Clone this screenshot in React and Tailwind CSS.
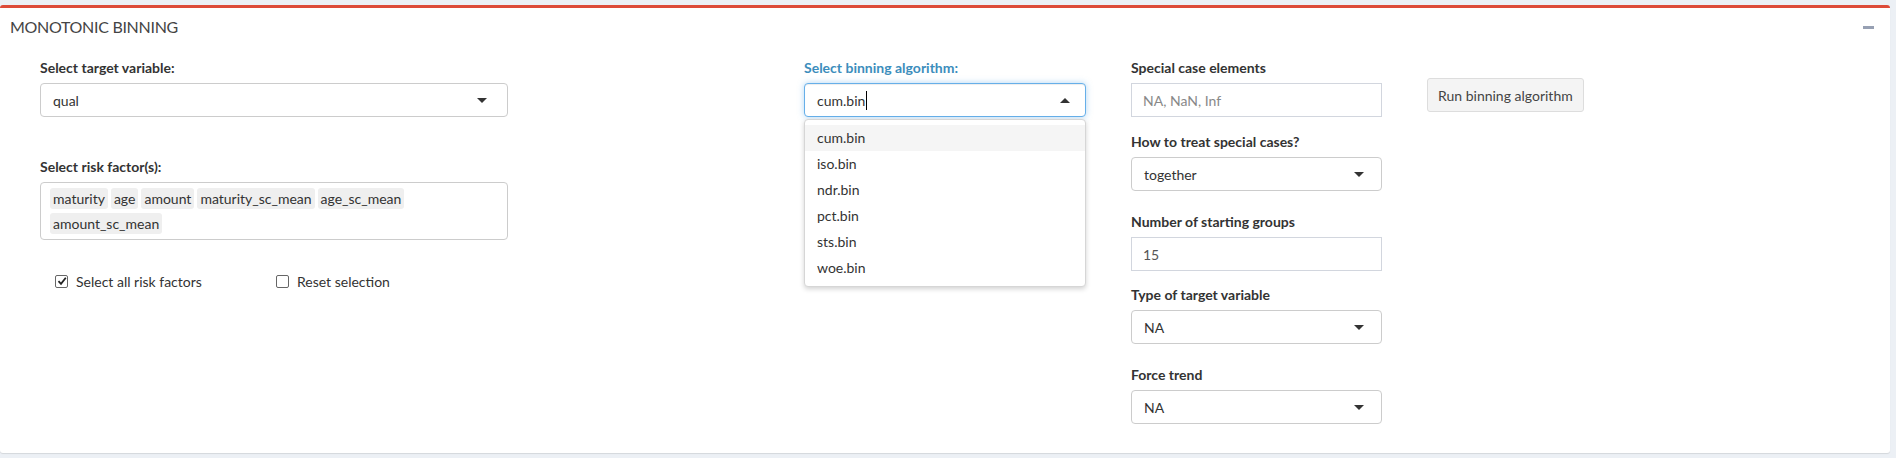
import React from 'react';

const font = { fontFamily: 'Lato, "Noto Sans", sans-serif' };

const Label = ({ children, active }) => (
  <div className={`h-[20px] leading-[20px] mb-[5px] text-[14px] font-bold ${active ? 'text-[#3c8dbc]' : 'text-[#333]'}`}>
    {children}
  </div>
);

const Caret = ({ up }) =>
  up ? (
    <span className="w-0 h-0 border-x-[5px] border-x-transparent border-b-[5px] border-b-[#333]" />
  ) : (
    <span className="w-0 h-0 border-x-[5px] border-x-transparent border-t-[5px] border-t-[#333]" />
  );

const Select = ({ value, caretRight = 'pr-[17px]' }) => (
  <div className={`h-[34px] border border-[#ccc] rounded-[4px] bg-white flex items-center justify-between pl-[12px] ${caretRight} text-[14px] text-[#333]`}>
    <span>{value}</span>
    <Caret />
  </div>
);

const TextInput = ({ value, placeholder }) => (
  <div className="h-[34px] border border-[#d2d6de] bg-white flex items-center px-[11px] text-[14px]">
    {value ? <span className="text-[#555]">{value}</span> : <span className="text-[#888]">{placeholder}</span>}
  </div>
);

const Chip = ({ children }) => (
  <span className="bg-[#efefef] text-[#333] rounded-[3px] px-[3px] h-[21px] leading-[21px] mr-[3px] mb-[4px] text-[14px]">
    {children}
  </span>
);

const Check = ({ checked, label }) => (
  <div className="flex items-center gap-[8px] h-[20px] text-[14px] text-[#333]">
    <span className="w-[13px] h-[13px] border border-[#666] rounded-[2px] bg-white flex items-center justify-center">
      {checked && (
        <svg width="10" height="10" viewBox="0 0 10 10">
          <path d="M1.5 5.2 L4 7.8 L8.8 1.8" fill="none" stroke="#222" strokeWidth="1.8" />
        </svg>
      )}
    </span>
    <span>{label}</span>
  </div>
);

const algorithms = ['cum.bin', 'iso.bin', 'ndr.bin', 'pct.bin', 'sts.bin', 'woe.bin'];
const riskFactors = ['maturity', 'age', 'amount', 'maturity_sc_mean', 'age_sc_mean', 'amount_sc_mean'];

export default function App() {
  return (
    <div className="w-full h-[458px] bg-[#ecf0f5] pt-[5px] pr-[6px]" style={font}>
      <div className="bg-white border-t-[3px] border-[#dd4b39] rounded-[3px] shadow-[0_1px_1px_rgba(0,0,0,0.1)] h-[448px]">
        {/* header */}
        <div className="flex items-center justify-between h-[38px] pl-[10px] pr-[16px]">
          <h3 className="text-[16px] tracking-[-0.3px] text-[#444] leading-none">MONOTONIC BINNING</h3>
          <span className="w-[11px] h-[3px] bg-[#97a0b3]" />
        </div>

        {/* body */}
        <div className="flex items-start pl-[40px] pt-[12px]">
          {/* target + risk factors */}
          <div className="w-[468px]">
            <Label>Select target variable:</Label>
            <Select value="qual" caretRight="pr-[20px]" />
            <div className="mt-[40px]">
              <Label>Select risk factor(s):</Label>
              <div className="min-h-[58px] border border-[#ccc] rounded-[4px] bg-white pl-[9px] pr-[8px] pt-[5px] pb-[1px] flex flex-wrap">
                {riskFactors.map((f) => (
                  <Chip key={f}>{f}</Chip>
                ))}
              </div>
            </div>
            <div className="flex mt-[31px]">
              <div className="w-[236px] pl-[15px]">
                <Check checked label="Select all risk factors" />
              </div>
              <div>
                <Check label="Reset selection" />
              </div>
            </div>
          </div>

          {/* binning algorithm */}
          <div className="w-[282px] ml-[296px] relative">
            <Label active>Select binning algorithm:</Label>
            <div className="h-[34px] border border-[#66afe9] rounded-[4px] bg-white flex items-center justify-between pl-[12px] pr-[15px] text-[14px] text-[#333] shadow-[inset_0_1px_1px_rgba(0,0,0,0.075),0_0_6px_rgba(102,175,233,0.5)]">
              <span className="flex items-center">
                cum.bin<span className="w-px h-[19px] bg-black ml-px" />
              </span>
              <Caret up />
            </div>
            <div className="absolute left-0 right-0 top-[61px] bg-white border border-[#d6d6d6] rounded-[4px] shadow-[0_2px_5px_rgba(0,0,0,0.18)] py-[5px] z-10">
              {algorithms.map((a, i) => (
                <div
                  key={a}
                  className={`h-[26px] leading-[26px] px-[12px] text-[14px] text-[#333] ${i === 0 ? 'bg-[#f5f5f5]' : ''}`}
                >
                  {a}
                </div>
              ))}
            </div>
          </div>

          {/* options */}
          <div className="w-[251px] ml-[45px]">
            <Label>Special case elements</Label>
            <TextInput placeholder="NA, NaN, Inf" />
            <div className="mt-[15px]">
              <Label>How to treat special cases?</Label>
              <Select value="together" />
            </div>
            <div className="mt-[21px]">
              <Label>Number of starting groups</Label>
              <TextInput value="15" />
            </div>
            <div className="mt-[14px]">
              <Label>Type of target variable</Label>
              <Select value="NA" />
            </div>
            <div className="mt-[21px]">
              <Label>Force trend</Label>
              <Select value="NA" />
            </div>
          </div>

          {/* run */}
          <button className="ml-[45px] mt-[20px] h-[34px] px-[10px] bg-[#f4f4f4] border border-[#ddd] rounded-[3px] text-[14px] text-[#444]">
            Run binning algorithm
          </button>
        </div>
      </div>
    </div>
  );
}
